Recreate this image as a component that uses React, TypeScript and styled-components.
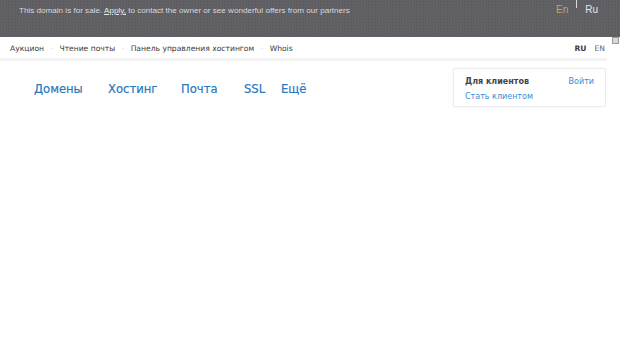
import styled, { createGlobalStyle } from "styled-components";

const GlobalStyle = createGlobalStyle`
  html, body {
    margin: 0;
    padding: 0;
    background: #ffffff;
  }
  body {
    font-family: "DejaVu Sans", Verdana, sans-serif;
  }
`;

const Page = styled.div`
  width: 620px;
  height: 343px;
  overflow: hidden;
  background: #fff;
`;

const SaleBar = styled.div`
  height: 37px;
  display: flex;
  justify-content: space-between;
  align-items: flex-start;
  padding: 0 19px;
  background-color: #5f5f63;
  background-image: repeating-conic-gradient(#636367 0 25%, #5d5d61 0 50%);
  background-size: 3px 3px;
`;

const SaleText = styled.p`
  margin: 6px 0 0;
  font-family: "Liberation Sans", Arial, sans-serif;
  font-size: 8.1px;
  color: #d8d8da;

  a {
    color: #e8e8ea;
    text-decoration: underline;
  }
`;

const LangSwitch = styled.div`
  display: flex;
  align-items: flex-start;
  gap: 8px;
  margin-right: 3px;
  font-family: "Liberation Sans", Arial, sans-serif;
  font-size: 10px;
`;

const Lang = styled.span<{ active?: boolean }>`
  margin-top: 4px;
  color: ${(p) => (p.active ? "#c9a25a" : "#e4e4e6")};
`;

const LangDivider = styled.span`
  width: 1px;
  height: 8px;
  background: #d8d8da;
`;

const TopNav = styled.div`
  width: 607px;
  height: 24px;
  display: flex;
  align-items: center;
  justify-content: space-between;
  padding: 1px 2px 0 10px;
  box-sizing: border-box;
  border-bottom: 3px solid #f3f3f3;
  position: relative;
`;

const TopLinks = styled.div`
  display: flex;
  align-items: center;
  gap: 6.5px;
  font-size: 7.6px;
  color: #3a3a3a;
`;

const Dot = styled.span`
  color: #c4c4c4;
`;

const TopLangs = styled.div`
  display: flex;
  gap: 8px;
  font-size: 7.6px;
  color: #555;
`;

const TopLang = styled.span<{ active?: boolean }>`
  font-weight: ${(p) => (p.active ? "bold" : "normal")};
  color: ${(p) => (p.active ? "#3a3a3a" : "#666")};
`;

const ScrollNub = styled.span`
  position: absolute;
  right: -12px;
  top: 0;
  width: 5px;
  height: 5px;
  border: 1px solid #999;
  background: #d8d8d8;
`;

const Main = styled.div`
  display: flex;
  justify-content: space-between;
  align-items: flex-start;
  width: 606px;
  padding-top: 7px;
`;

const MainNav = styled.nav`
  display: flex;
  padding: 14px 0 0 34px;
  font-size: 11.6px;
  font-weight: normal;
`;

const MainLink = styled.a<{ w: number }>`
  width: ${(p) => p.w}px;
  color: #2a78bd;
  text-decoration: none;
  -webkit-text-stroke: 0.2px #2a78bd;
`;

const ClientBox = styled.div`
  width: 153px;
  height: 39px;
  box-sizing: border-box;
  padding: 7px 11px 0 11px;
  border: 1px solid #ececec;
  border-radius: 2px;
  box-shadow: 0 0 2px rgba(0, 0, 0, 0.06);
`;

const ClientRow = styled.div`
  display: flex;
  justify-content: space-between;
  font-size: 8px;
  line-height: 12px;
`;

const ClientTitle = styled.span`
  font-weight: bold;
  color: #444;
`;

const ClientLink = styled.a`
  color: #3a8bd0;
  text-decoration: none;
`;

const JoinLink = styled(ClientLink)`
  display: block;
  margin-top: 4px;
  font-size: 8px;
`;

const topLinks = ["Аукцион", "Чтение почты", "Панель управления хостингом", "Whois"];
const mainLinks = [
  { label: "Домены", w: 74 },
  { label: "Хостинг", w: 73 },
  { label: "Почта", w: 63 },
  { label: "SSL", w: 37 },
  { label: "Ещё", w: 30 },
];

export default function App() {
  return (
    <Page>
      <GlobalStyle />
      <SaleBar>
        <SaleText>
          This domain is for sale. <a>Apply,</a> to contact the owner or see
          wonderful offers from our partners
        </SaleText>
        <LangSwitch>
          <Lang active>En</Lang>
          <LangDivider />
          <Lang>Ru</Lang>
        </LangSwitch>
      </SaleBar>
      <TopNav>
        <TopLinks>
          {topLinks.map((l, i) => (
            <>
              {i > 0 && <Dot key={"d" + i}>·</Dot>}
              <span key={l}>{l}</span>
            </>
          ))}
        </TopLinks>
        <TopLangs>
          <TopLang active>RU</TopLang>
          <TopLang>EN</TopLang>
        </TopLangs>
        <ScrollNub />
      </TopNav>
      <Main>
        <MainNav>
          {mainLinks.map((l) => (
            <MainLink key={l.label} w={l.w}>
              {l.label}
            </MainLink>
          ))}
        </MainNav>
        <ClientBox>
          <ClientRow>
            <ClientTitle>Для клиентов</ClientTitle>
            <ClientLink>Войти</ClientLink>
          </ClientRow>
          <JoinLink>Стать клиентом</JoinLink>
        </ClientBox>
      </Main>
    </Page>
  );
}
